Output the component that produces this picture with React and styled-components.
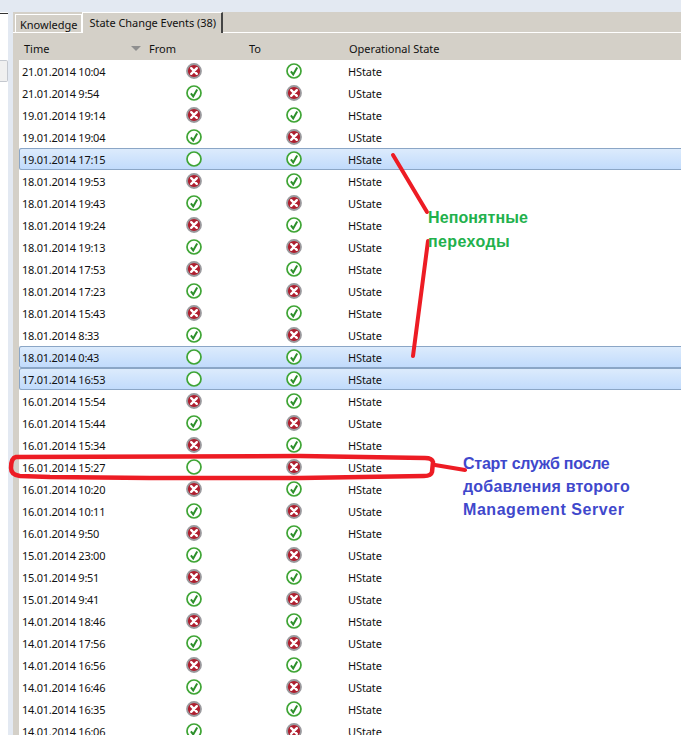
import React from 'react';
import styled, { createGlobalStyle } from 'styled-components';

const GlobalStyle = createGlobalStyle`
  html, body {
    margin: 0;
    padding: 0;
    background: #fff;
    overflow: hidden;
  }
  #root {
    height: 735px;
  }
`;

const Page = styled.div`
  position: relative;
  width: 681px;
  height: 735px;
  overflow: hidden;
  display: flex;
  flex-direction: column;
  font-family: "Noto Sans", sans-serif;
  font-size: 11px;
  color: #111;
`;

const TopBand = styled.div`
  height: 12px;
  flex: none;
  background: #e3e9f2;
`;

const Body = styled.div`
  flex: 1;
  display: flex;
  min-height: 0;
`;

const SidePane = styled.div`
  width: 8px;
  flex: none;
  background: #fff;
  border-top: 1px solid #333;
  margin-top: 1px;
  padding-top: 46px;
`;

const SideButton = styled.div`
  height: 20px;
  border: 1px solid #c4c8cf;
  border-left: none;
  border-radius: 0 2px 2px 0;
  background: #f0f0f0;
`;

const Gutter = styled.div`
  width: 5px;
  flex: none;
  background: #e3e9f2;
`;

const Panel = styled.div`
  flex: 1;
  min-width: 0;
  display: flex;
  flex-direction: column;
  background: #d4d0c8;
`;

const TabStrip = styled.div`
  height: 20px;
  flex: none;
  display: flex;
  align-items: flex-end;
  padding-left: 2px;
  border-bottom: 1px solid #fff;
`;

const Tab = styled.div`
  height: ${p => (p.$active ? 21 : 19)}px;
  margin-bottom: -1px;
  box-sizing: border-box;
  display: flex;
  align-items: center;
  background: #d4d0c8;
  border-top: 1px solid #fff;
  border-left: 1px solid #fff;
  border-right: ${p => (p.$active ? '2px solid #444' : '1px solid #fff')};
  border-bottom: ${p => (p.$active ? 'none' : '1px solid #fff')};
  padding: ${p => (p.$active ? '0 5px 2px 6px' : '1px 4px 0 4px')};
  letter-spacing: ${p => (p.$active ? '-0.05px' : '0')};
  white-space: nowrap;
`;

const Content = styled.div`
  flex: 1;
  min-height: 0;
  padding-left: 6px;
  display: flex;
  flex-direction: column;
`;

const HeaderRow = styled.div`
  height: 27px;
  box-sizing: border-box;
  padding-top: 4px;
  flex: none;
  display: grid;
  grid-template-columns: 130px 100px 100px 1fr;
  align-items: center;
`;

const HeaderCell = styled.div`
  position: relative;
  padding-left: ${p => p.$indent || 0}px;
`;

const SortArrow = styled.span`
  position: absolute;
  right: 8px;
  top: 5px;
  width: 0;
  height: 0;
  border-left: 5px solid transparent;
  border-right: 5px solid transparent;
  border-top: 5px solid #8f8f8f;
`;

const List = styled.div`
  flex: 1;
  min-height: 0;
  background: #fff;
  overflow: hidden;
`;

const Row = styled.div`
  height: 22px;
  box-sizing: border-box;
  display: grid;
  grid-template-columns: 167px 100px 50px 1fr;
  align-items: center;
  ${p =>
    p.$selected &&
    `
    background: linear-gradient(#dcebfc, #c1dbfc);
    border-top: 1px solid #8ba6c6;
    border-bottom: 1px solid #8ba6c6;
    box-shadow: inset 1px 0 0 #8ba6c6;
    border-radius: 2px 0 0 2px;
  `}
`;

const TimeCell = styled.div`
  padding-left: 3px;
  letter-spacing: -0.25px;
`;

const IconCell = styled.div`
  display: flex;
  align-items: center;
`;

const StateCell = styled.div`
  padding-left: 12px;
  letter-spacing: -0.1px;
`;

const Annotations = styled.svg`
  position: absolute;
  inset: 0;
  pointer-events: none;
`;

const Note = styled.div`
  position: absolute;
  left: ${p => p.$left}px;
  top: ${p => p.$top}px;
  font-family: "Liberation Sans", sans-serif;
  font-weight: 700;
  font-size: 16px;
  line-height: ${p => p.$lh}px;
  color: ${p => p.$color};
  white-space: nowrap;
`;

const NoteLine = styled.div`
  letter-spacing: ${p => p.$spacing || 0}px;
`;

const StatusIcon = ({ kind }) => {
  if (kind === 'x') {
    return (
      <svg width="16" height="16" viewBox="0 0 16 16">
        <circle cx="8" cy="8" r="7" fill="#b01e2e" stroke="#9a9a9e" strokeWidth="1.8" />
        <path d="M5.2 5.2 L10.8 10.8 M10.8 5.2 L5.2 10.8" stroke="#fff" strokeWidth="2.4" strokeLinecap="round" />
      </svg>
    );
  }
  if (kind === 'v') {
    return (
      <svg width="16" height="16" viewBox="0 0 16 16">
        <circle cx="8" cy="8" r="7" fill="#fff" stroke="#3fa535" strokeWidth="1.7" />
        <path d="M4.9 8.4 L7.2 11.4 L11.2 4.4" fill="none" stroke="#2c8f2a" strokeWidth="2" />
      </svg>
    );
  }
  return (
    <svg width="16" height="16" viewBox="0 0 16 16">
      <circle cx="8" cy="8" r="7" fill="#fff" stroke="#3fa535" strokeWidth="1.7" />
    </svg>
  );
};

const events = [
  ['21.01.2014 10:04', 'x', 'v', 'HState'],
  ['21.01.2014 9:54', 'v', 'x', 'UState'],
  ['19.01.2014 19:14', 'x', 'v', 'HState'],
  ['19.01.2014 19:04', 'v', 'x', 'UState'],
  ['19.01.2014 17:15', 'o', 'v', 'HState', true],
  ['18.01.2014 19:53', 'x', 'v', 'HState'],
  ['18.01.2014 19:43', 'v', 'x', 'UState'],
  ['18.01.2014 19:24', 'x', 'v', 'HState'],
  ['18.01.2014 19:13', 'v', 'x', 'UState'],
  ['18.01.2014 17:53', 'x', 'v', 'HState'],
  ['18.01.2014 17:23', 'v', 'x', 'UState'],
  ['18.01.2014 15:43', 'x', 'v', 'HState'],
  ['18.01.2014 8:33', 'v', 'x', 'UState'],
  ['18.01.2014 0:43', 'o', 'v', 'HState', true],
  ['17.01.2014 16:53', 'o', 'v', 'HState', true],
  ['16.01.2014 15:54', 'x', 'v', 'HState'],
  ['16.01.2014 15:44', 'v', 'x', 'UState'],
  ['16.01.2014 15:34', 'x', 'v', 'HState'],
  ['16.01.2014 15:27', 'o', 'x', 'UState'],
  ['16.01.2014 10:20', 'x', 'v', 'HState'],
  ['16.01.2014 10:11', 'v', 'x', 'UState'],
  ['16.01.2014 9:50', 'x', 'v', 'HState'],
  ['15.01.2014 23:00', 'v', 'x', 'UState'],
  ['15.01.2014 9:51', 'x', 'v', 'HState'],
  ['15.01.2014 9:41', 'v', 'x', 'UState'],
  ['14.01.2014 18:46', 'x', 'v', 'HState'],
  ['14.01.2014 17:56', 'v', 'x', 'UState'],
  ['14.01.2014 16:56', 'x', 'v', 'HState'],
  ['14.01.2014 16:46', 'v', 'x', 'UState'],
  ['14.01.2014 16:35', 'x', 'v', 'HState'],
  ['14.01.2014 16:06', 'v', 'x', 'UState'],
];

const App = () => (
  <Page>
    <GlobalStyle />
    <TopBand />
    <Body>
      <SidePane>
        <SideButton />
      </SidePane>
      <Gutter />
      <Panel>
        <TabStrip>
          <Tab>Knowledge</Tab>
          <Tab $active>State Change Events (38)</Tab>
        </TabStrip>
        <Content>
          <HeaderRow>
            <HeaderCell $indent={5}>
              Time
              <SortArrow />
            </HeaderCell>
            <HeaderCell>From</HeaderCell>
            <HeaderCell>To</HeaderCell>
            <HeaderCell>Operational State</HeaderCell>
          </HeaderRow>
          <List>
            {events.map(([time, from, to, state, selected], i) => (
              <Row key={i} $selected={selected}>
                <TimeCell>{time}</TimeCell>
                <IconCell>
                  <StatusIcon kind={from} />
                </IconCell>
                <IconCell>
                  <StatusIcon kind={to} />
                </IconCell>
                <StateCell>{state}</StateCell>
              </Row>
            ))}
          </List>
        </Content>
      </Panel>
    </Body>
    <Annotations width="681" height="735" viewBox="0 0 681 735">
      <g fill="none" stroke="#ed1c24" strokeLinecap="round" strokeLinejoin="round">
        <path d="M393 155 L427 212" strokeWidth="4" />
        <path d="M428 241 L413 356" strokeWidth="4" />
        <path
          d="M16 457 L300 456 L425 458 Q432 458 433 462 L432 472 Q431 476 424 476 L300 478 L150 478 L50 477 L20 476 Q11 475 11 468 Q11 458 16 457 Z"
          strokeWidth="4.5"
        />
        <path d="M435 465 L465 470" strokeWidth="4" />
      </g>
    </Annotations>
    <Note $left={428} $top={206} $lh={24} $color="#22b14c">
      <NoteLine $spacing={0.1}>Непонятные</NoteLine>
      <NoteLine $spacing={0.4}>переходы</NoteLine>
    </Note>
    <Note $left={463} $top={452} $lh={23} $color="#3f48cc">
      <NoteLine $spacing={-0.25}>Старт служб после</NoteLine>
      <NoteLine $spacing={0.2}>добавления второго</NoteLine>
      <NoteLine $spacing={0.55}>Management Server</NoteLine>
    </Note>
  </Page>
);

export default App;
